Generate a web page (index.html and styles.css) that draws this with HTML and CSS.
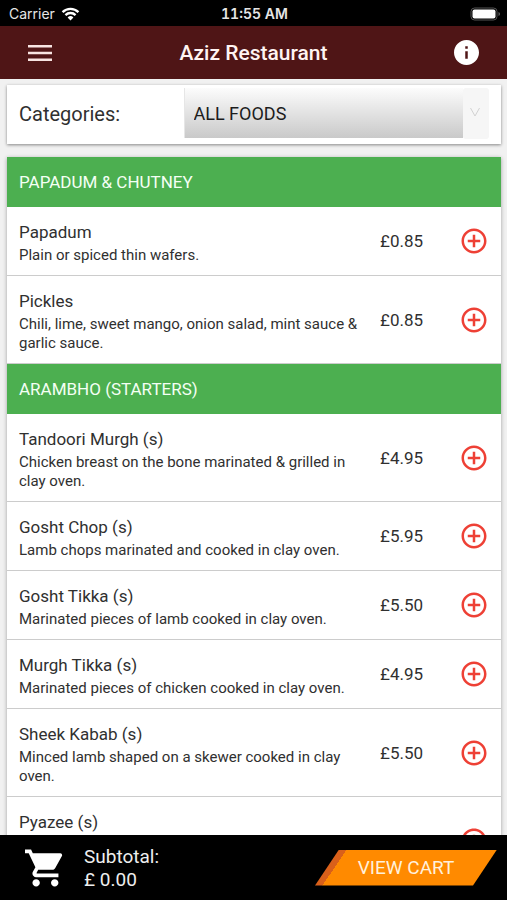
FILE: index.html
```html
<!DOCTYPE html>
<html lang="en">
<head>
<meta charset="utf-8">
<meta name="viewport" content="width=device-width, initial-scale=1">
<title>Aziz Restaurant</title>
<link rel="stylesheet" href="styles.css">
</head>
<body>
<svg class="sprite" aria-hidden="true">
  <symbol id="plus" viewBox="0 0 24 24">
    <path d="M13 7h-2v4H7v2h4v4h2v-4h4v-2h-4V7zm-1-5C6.48 2 2 6.48 2 12s4.48 10 10 10 10-4.48 10-10S17.52 2 12 2zm0 18c-4.41 0-8-3.59-8-8s3.59-8 8-8 8 3.59 8 8-3.59 8-8 8z"/>
  </symbol>
</svg>
<div class="app">
  <div class="status">
    <div class="carrier">Carrier
      <svg class="wifi" viewBox="0 0 20 15" aria-hidden="true"><path d="M1.5 5.5a12 12 0 0 1 17 0M4.6 8.7a7.6 7.6 0 0 1 10.8 0" fill="none" stroke="#fff" stroke-width="2.5"/><path d="M10 14.5 6.9 11.3a4.4 4.4 0 0 1 6.2 0z" fill="#fff"/></svg>
    </div>
    <div class="clock">11:55 AM</div>
    <svg class="battery" viewBox="0 0 30 14" aria-hidden="true"><rect x="1" y="1" width="26" height="12" rx="3.5" fill="none" stroke="#555"/><rect x="2.5" y="2.5" width="23" height="9" rx="2" fill="#fff"/><path d="M28.500 5v4q1.500-.5 1.500-2t-1.500-2z" fill="#666"/></svg>
  </div>
  <header class="topbar">
    <button class="icon-btn" aria-label="Menu"><svg class="icon-menu" viewBox="0 0 24 16" aria-hidden="true"><path d="M0 0h24v2.500H0zM0 6.700h24v2.500H0zM0 13.500h24v2.500H0z"/></svg></button>
    <h1>Aziz Restaurant</h1>
    <button class="icon-btn" aria-label="Information"><svg class="icon-info" viewBox="2 2 20 20" aria-hidden="true"><path d="M12 2C6.480 2 2 6.480 2 12s4.480 10 10 10 10-4.480 10-10S17.520 2 12 2zm1 15h-2v-6h2v6zm0-8h-2V7h2v2z"/></svg></button>
  </header>
  <main>
    <div class="filter">
      <label for="category">Categories:</label>
      <div class="picker">
        <select id="category"><option>ALL FOODS</option></select>
        <svg class="chevron" viewBox="0 0 26 50" aria-hidden="true"><path d="M7.500 19.500l4.500 8 4.500-8" fill="none" stroke="#d2d2d2"/></svg>
      </div>
    </div>
    <div class="menu">
      <section>
        <h2>Papadum &amp; Chutney</h2>
        <ul>
          <li><div class="dish"><h3>Papadum</h3><p>Plain or spiced thin wafers.</p></div><span class="price">£0.85</span><button class="add" aria-label="Add Papadum"><svg><use href="#plus"/></svg></button></li>
          <li><div class="dish"><h3>Pickles</h3><p>Chili, lime, sweet mango, onion salad, mint sauce &amp; garlic sauce.</p></div><span class="price">£0.85</span><button class="add" aria-label="Add Pickles"><svg><use href="#plus"/></svg></button></li>
        </ul>
      </section>
      <section>
        <h2>Arambho (Starters)</h2>
        <ul>
          <li><div class="dish"><h3>Tandoori Murgh (s)</h3><p>Chicken breast on the bone marinated &amp; grilled in clay oven.</p></div><span class="price">£4.95</span><button class="add" aria-label="Add Tandoori Murgh"><svg><use href="#plus"/></svg></button></li>
          <li><div class="dish"><h3>Gosht Chop (s)</h3><p>Lamb chops marinated and cooked in clay oven.</p></div><span class="price">£5.95</span><button class="add" aria-label="Add Gosht Chop"><svg><use href="#plus"/></svg></button></li>
          <li><div class="dish"><h3>Gosht Tikka (s)</h3><p>Marinated pieces of lamb cooked in clay oven.</p></div><span class="price">£5.50</span><button class="add" aria-label="Add Gosht Tikka"><svg><use href="#plus"/></svg></button></li>
          <li><div class="dish"><h3>Murgh Tikka (s)</h3><p>Marinated pieces of chicken cooked in clay oven.</p></div><span class="price">£4.95</span><button class="add" aria-label="Add Murgh Tikka"><svg><use href="#plus"/></svg></button></li>
          <li><div class="dish"><h3>Sheek Kabab (s)</h3><p>Minced lamb shaped on a skewer cooked in clay oven.</p></div><span class="price">£5.50</span><button class="add" aria-label="Add Sheek Kabab"><svg><use href="#plus"/></svg></button></li>
          <li class="tall"><div class="dish"><h3>Pyazee (s)</h3></div><span class="price">£4.50</span><button class="add" aria-label="Add Pyazee"><svg><use href="#plus"/></svg></button></li>
        </ul>
      </section>
    </div>
  </main>
  <footer class="cart">
    <svg class="icon-cart" viewBox="1 2 21 20" aria-hidden="true"><path d="M7 18c-1.100 0-1.990.9-1.990 2S5.900 22 7 22s2-.9 2-2-.9-2-2-2zM1 2v2h2l3.600 7.590-1.350 2.450c-.16.280-.25.610-.25.960 0 1.100.9 2 2 2h12v-2H7.420c-.14 0-.25-.11-.25-.25l.03-.12.9-1.630h7.450c.75 0 1.410-.41 1.750-1.030l3.580-6.490c.08-.14.12-.31.12-.48 0-.55-.45-1-1-1H5.210l-.94-2H1zm16 16c-1.100 0-1.990.9-1.990 2s.89 2 1.990 2 2-.9 2-2-.9-2-2-2z"/></svg>
    <div class="subtotal"><div>Subtotal:</div><div>£ 0.00</div></div>
    <button class="view-cart">VIEW CART</button>
  </footer>
</div>
</body>
</html>
```
FILE: styles.css
```css
* { box-sizing: border-box; }
body, h1, h2, h3, p, ul { margin: 0; padding: 0; }
h1, h2, h3 { font-weight: 400; }
ul { list-style: none; }
button { border: 0; padding: 0; background: none; cursor: pointer; }
svg { display: block; fill: currentColor; }

body {
  background: #f1f1f1;
  color: #303030;
  font-family: Roboto, "Liberation Sans", sans-serif;
}

.sprite { display: none; }

.app {
  display: flex;
  flex-direction: column;
  height: 100vh;
  overflow: hidden;
}

.status {
  display: grid;
  grid-template-columns: 1fr auto 1fr;
  align-items: center;
  flex: none;
  height: 26px;
  padding: 1px 7px 0 9px;
  background: #000;
  color: #e6e6e6;
  font: 14px/20px Inter, sans-serif;
}
.carrier { display: flex; align-items: center; gap: 6px; }
.wifi { width: 19px; height: 14px; }
.clock { font-weight: 600; font-variant-numeric: tabular-nums; }
.battery { width: 30px; height: 14px; justify-self: end; }

.topbar {
  display: flex;
  align-items: center;
  justify-content: space-between;
  flex: none;
  height: 53px;
  padding: 0 20px;
  background: #4f1516;
  color: #fff4f2;
}
.topbar h1 { font-size: 21px; line-height: 28px; font-weight: 500; }
.icon-btn { display: grid; place-items: center; width: 40px; height: 40px; color: #fff; }
.icon-menu { width: 24px; height: 16px; color: #f8e4e2; }
.icon-info { width: 25px; height: 25px; }

main {
  flex: 1;
  min-height: 0;
  overflow: hidden;
  padding: 6px 6px 0 7px;
}

.filter {
  display: flex;
  align-items: flex-start;
  justify-content: space-between;
  height: 59px;
  padding: 3px 12px 0 12px;
  margin-bottom: 13px;
  background: #fff;
  box-shadow: 0 1px 3px rgba(0, 0, 0, .45);
}
.filter label { font-size: 20px; line-height: 52px; }
.picker { display: flex; width: 65%; }
.picker select {
  flex: 1;
  min-width: 0;
  height: 50px;
  padding: 0 9px;
  border: 1px solid #e6e6e6;
  border-width: 0 0 0 1px;
  border-radius: 0;
  appearance: none;
  background: linear-gradient(#fcfcfc, #c9c9c9);
  color: #1c1c1c;
  font: 18px Roboto, sans-serif;
}
.chevron { width: 26px; height: 51px; background: #f6f6f6; border-radius: 3px; }

.menu { background: #fff; box-shadow: 0 1px 4px rgba(0, 0, 0, .35); }
.menu h2 {
  padding: 0 12px;
  background: #4caf50;
  color: #f4fff4;
  font-size: 17px;
  line-height: 50px;
  text-transform: uppercase;
}
.menu li {
  display: flex;
  align-items: center;
  padding: 0 14px 0 12px;
  border-bottom: 1px solid #ccc;
}
.dish { flex: 1; padding: 14px 16px 10px 0; }
.dish h3 { margin-bottom: 3px; font-size: 17px; line-height: 22px; }
.dish p { font-size: 15px; line-height: 19px; }
.menu .tall { height: 88px; align-items: flex-start; }
.tall .price, .tall .add { align-self: center; }
.price { width: 81px; font-size: 17px; line-height: 22px; }
.add { width: 26px; height: 26px; color: #ee4035; }
.add svg { width: 30px; height: 30px; margin: -2px; }

.cart {
  display: flex;
  align-items: center;
  flex: none;
  height: 65px;
  padding: 0 10px 0 25px;
  background: #000;
  color: #eee;
}
.icon-cart { width: 39px; height: 38px; color: #fff; }
.subtotal { flex: 1; margin-left: 20px; font-size: 19px; line-height: 23px; }
.view-cart {
  width: 182px;
  height: 36px;
  background: linear-gradient(124deg, #d9601a 26px, #ff8a00 26px);
  clip-path: polygon(24px 0, 100% 0, calc(100% - 24px) 100%, 0 100%);
  color: #fff0dc;
  font: 19px Roboto, sans-serif;
}
```
